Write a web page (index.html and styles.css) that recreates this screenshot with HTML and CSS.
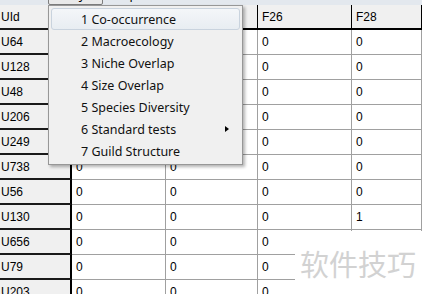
FILE: index.html
```html
<!DOCTYPE html>
<html lang="en">
<head>
    <meta charset="UTF-8">
    <title>Co-occurrence data</title>
    <link rel="stylesheet" href="styles.css">
</head>
<body>
    <div class="menubar">
        <div class="menubar-items">
            <span class="menu-title file">File</span>
            <span class="menu-title pressed">Analyze</span>
            <span class="menu-title">Help</span>
        </div>
    </div>

    <div class="sheet">
        <div class="cell row-head">UId</div>
        <div class="cell col-head">F1</div>
        <div class="cell col-head">F14</div>
        <div class="cell col-head">F26</div>
        <div class="cell col-head">F28</div>

        <div class="cell row-head">U64</div>
        <div class="cell">0</div><div class="cell">0</div><div class="cell">0</div><div class="cell">0</div>
        <div class="cell row-head">U128</div>
        <div class="cell">0</div><div class="cell">0</div><div class="cell">0</div><div class="cell">0</div>
        <div class="cell row-head">U48</div>
        <div class="cell">0</div><div class="cell">0</div><div class="cell">0</div><div class="cell">0</div>
        <div class="cell row-head">U206</div>
        <div class="cell">0</div><div class="cell">0</div><div class="cell">0</div><div class="cell">0</div>
        <div class="cell row-head">U249</div>
        <div class="cell">0</div><div class="cell">0</div><div class="cell">0</div><div class="cell">0</div>
        <div class="cell row-head">U738</div>
        <div class="cell">0</div><div class="cell">0</div><div class="cell">0</div><div class="cell">0</div>
        <div class="cell row-head">U56</div>
        <div class="cell">0</div><div class="cell">0</div><div class="cell">0</div><div class="cell">0</div>
        <div class="cell row-head">U130</div>
        <div class="cell">0</div><div class="cell">0</div><div class="cell">0</div><div class="cell">1</div>
        <div class="cell row-head">U656</div>
        <div class="cell">0</div><div class="cell">0</div><div class="cell">0</div><div class="cell">0</div>
        <div class="cell row-head">U79</div>
        <div class="cell">0</div><div class="cell">0</div><div class="cell">0</div><div class="cell">0</div>
        <div class="cell row-head">U203</div>
        <div class="cell">0</div><div class="cell">0</div><div class="cell">0</div><div class="cell">0</div>
    </div>

    <ul class="dropdown">
        <li class="item active">1 Co-occurrence</li>
        <li class="item">2 Macroecology</li>
        <li class="item">3 Niche Overlap</li>
        <li class="item">4 Size Overlap</li>
        <li class="item">5 Species Diversity</li>
        <li class="item has-sub">6 Standard tests <span class="arrow"></span></li>
        <li class="item">7 Guild Structure</li>
    </ul>

    <div class="watermark">软件技巧</div>
</body>
</html>
```

FILE: styles.css
```css
body {
    margin: 0;
    height: 294px;
    overflow: hidden;
    position: relative;
    background: #fff;
    font-family: "Liberation Sans", Arial, sans-serif;
    font-size: 12px;
    color: #000;
}

/* Menu bar (only its lower edge is visible) */
.menubar {
    height: 5px;
    overflow: hidden;
    background: #e3e8ee;
}

.menubar-items {
    display: flex;
    margin-top: -15px;
    font-family: "Noto Sans", sans-serif;
    font-size: 12.5px;
}

.menu-title {
    height: 20px;
    line-height: 20px;
    padding: 0 7px;
    box-sizing: border-box;
}

.menu-title.file {
    width: 48px;
}

.menu-title.pressed {
    width: 55px;
    padding: 0;
    text-align: center;
    border: 1px solid #7d7d7d;
    border-radius: 2px;
    background: #e9e9e9;
    line-height: 18px;
}

/* Grid */
.sheet {
    display: grid;
    grid-template-columns: 72px 94px 92px 94px 1fr;
    grid-auto-rows: 25px;
}

.cell {
    display: flex;
    align-items: center;
    padding-left: 4px;
    box-sizing: border-box;
    border-right: 1px solid #a0a0a0;
    border-bottom: 1px solid #a0a0a0;
    white-space: nowrap;
}

.row-head {
    padding-left: 1px;
    background: #f0f0f0;
    border-right: 2px solid #000;
    border-bottom: 2px solid #1a1a1a;
}

.col-head {
    background: #f0f0f0;
    border-right: 1px solid #000;
    border-bottom: 2px solid #000;
}

/* Dropdown menu */
.dropdown {
    position: absolute;
    left: 48px;
    top: 5px;
    width: 195px;
    margin: 0;
    padding: 2px;
    box-sizing: border-box;
    list-style: none;
    background: #f0f0f0;
    border: 1px solid #979797;
    box-shadow: 2px 2px 3px rgba(0,0,0,0.3);
    font-family: "Noto Sans", sans-serif;
    font-size: 12.5px;
    color: #111;
}

.item {
    height: 22px;
    line-height: 22px;
    padding-left: 29px;
    box-sizing: border-box;
    border: 1px solid transparent;
    border-radius: 3px;
    position: relative;
}

.item.active {
    border-color: #c9d3de;
    background: linear-gradient(#f4f6f9, #e8edf2);
}

.arrow {
    position: absolute;
    right: 10px;
    top: 7px;
    border-left: 4px solid #000;
    border-top: 3.5px solid transparent;
    border-bottom: 3.5px solid transparent;
}

/* Watermark */
.watermark {
    position: absolute;
    left: 295px;
    top: 231px;
    right: 0;
    bottom: 0;
    padding-left: 5px;
    display: flex;
    align-items: center;
    background: #fff;
    font-family: "Noto Sans CJK SC", sans-serif;
    font-size: 29px;
    color: #d2d2d2;
    letter-spacing: 0;
}
```
